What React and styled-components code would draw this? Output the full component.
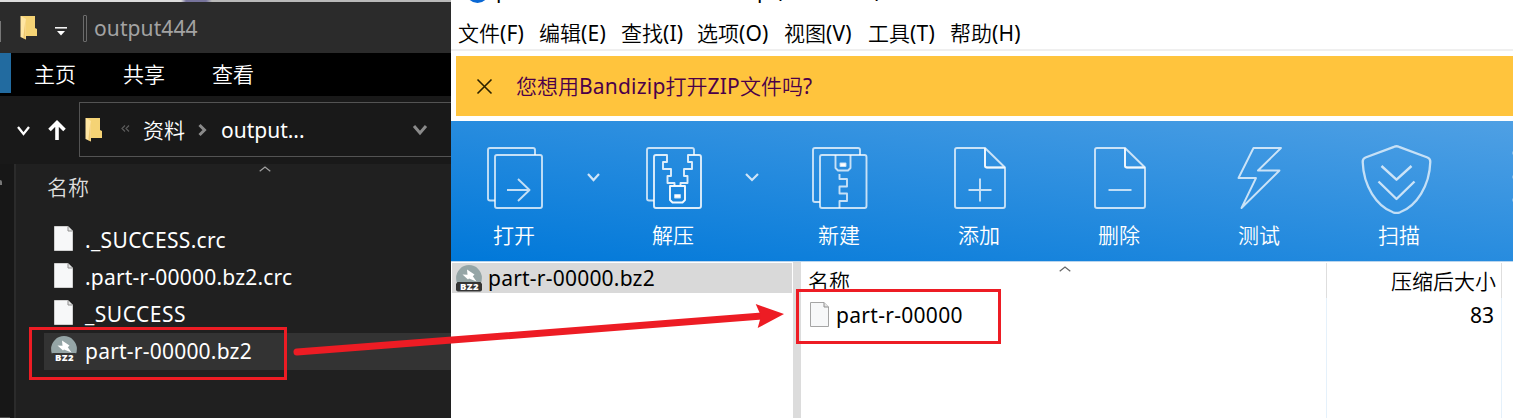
import React from "react";
import styled, { createGlobalStyle } from "styled-components";

const Global = createGlobalStyle`
  * { box-sizing: border-box; }
  body { margin: 0; background: #fff; overflow: hidden; }
  svg { display: block; flex: none; overflow: visible; }
`;

const Desktop = styled.div`
  position: relative;
  display: flex;
  width: 1513px;
  height: 418px;
  overflow: hidden;
  font-family: "Noto Sans", "Noto Sans CJK SC", sans-serif;
  font-size: 21px;
  line-height: 30px;
  white-space: nowrap;
`;

const Text = styled.span`
  display: block;
  flex: none;
  letter-spacing: ${(p) => p.$ls || 0}px;
  margin-left: ${(p) => p.$ml || 0}px;
`;

const Han = styled.span`
  font-weight: 350;
  letter-spacing: 0;
`;

/* Chinese runs are set one step lighter than the Latin ones beside them. */
const Mixed = ({ children, ...rest }) => (
  <Text {...rest}>
    {children.split(/([\u4e00-\u9fff]+)/).map((run, i) => (i % 2 ? <Han key={i}>{run}</Han> : run))}
  </Text>
);

/* ---------- file explorer ---------- */

const Explorer = styled.section`
  display: flex;
  flex-direction: column;
  width: 451px;
  height: 418px;
  flex: none;
  overflow: hidden;
  background: #191919;
  color: #fff;
`;

const DesktopEdge = styled.div`
  height: 2px;
  flex: none;
  background: linear-gradient(90deg, #dcdcdc 0 181px, #77749c 186px 206px, #b9b9b9 212px 100%);
`;

const TitleBar = styled.header`
  display: flex;
  align-items: center;
  height: 51px;
  flex: none;
  background: #2b2b2b;
  color: #a3a3a3;
`;

const EdgeTick = styled.i`
  width: 1px;
  height: 21px;
  margin: 7px 19px 0 0;
  background: #777;
`;

const QuickAccess = styled.div`
  margin: 8px 16px 0 18px;
`;

const Separator = styled.i`
  width: 4px;
  height: 27px;
  margin: 2px 7px 0 0;
  border: 1px solid #6b6b6b;
  border-radius: 1px;
`;

const Ribbon = styled.nav`
  display: flex;
  height: 43px;
  flex: none;
  background: #000;
`;

const FileTab = styled.div`
  width: 11px;
  height: 40px;
  margin-right: 23px;
  background: #226ba0;
`;

const RibbonTab = styled.div`
  width: 89px;
  padding-top: 6px;
  font-weight: 350;
`;

const AddressRow = styled.div`
  display: flex;
  height: 68px;
  flex: none;
  padding: 6px 0 0 17px;
`;

const NavButtons = styled.div`
  display: flex;
  align-items: center;
  gap: 18px;
  width: 62px;
  height: 56px;
`;

const AddressBox = styled.div`
  display: flex;
  align-items: center;
  flex: 1;
  height: 55px;
  padding-left: 5px;
  border: 1px solid #535353;
  border-right: 0;
`;

const Body = styled.div`
  display: flex;
  flex: 1;
`;

const NavPane = styled.div`
  display: flex;
  flex-direction: column;
  justify-content: space-between;
  width: 16px;
  padding-top: 16px;
  background: #171717;
  border-right: 2px solid #2b2b2b;
`;

const PinEdge = styled.i`
  width: 2px;
  height: 5px;
  background: #777;
  border-radius: 0 2px 0 0;
`;

const ScrollEdge = styled.i`
  width: 10px;
  height: 1px;
  background: #4d4d4d;
`;

const FileList = styled.div`
  flex: 1;
  background: #202020;
`;

const ColumnHeader = styled.div`
  display: flex;
  align-items: flex-start;
  height: 58px;
  padding: 2px 0 0 31px;
  color: #dedede;
`;

const ColumnName = styled.div`
  width: 212px;
  padding-top: 6px;
  font-weight: 350;
`;

const FileRow = styled.div`
  display: flex;
  align-items: center;
  height: 37px;
  margin-left: 28px;
  padding-bottom: 2px;
  background: ${(p) => (p.$selected ? "#333" : "transparent")};
`;

const IconCell = styled.div`
  display: flex;
  align-items: center;
  width: 41px;
  padding: 0 0 2px ${(p) => p.$inset}px;
  flex: none;
`;

/* ---------- archive window ---------- */

const Archive = styled.section`
  display: flex;
  flex-direction: column;
  flex: 1;
  height: 418px;
  overflow: hidden;
  background: #fff;
  color: #000;
`;

const Caption = styled.div`
  display: flex;
  align-items: flex-end;
  height: 12px;
  flex: none;
  padding: 0 0 7px 15px;
`;

const AppDot = styled.i`
  width: 23px;
  height: 23px;
  margin: 0 7px 2px 0;
  border-radius: 50%;
  background: #0a68d4;
`;

const MenuBar = styled.nav`
  display: grid;
  grid-template-columns: 81px 82px 76px 87px 84px 82px 100px;
  align-items: center;
  height: 39px;
  flex: none;
  padding: 4px 0 0 7px;
  border-bottom: 2px solid #efefef;
`;

const Banner = styled.div`
  display: flex;
  align-items: center;
  height: 60px;
  flex: none;
  margin: 5px 0 5px 5px;
  padding-left: 21px;
  background: #ffc43d;
  color: #4b0049;
`;

const Toolbar = styled.div`
  display: flex;
  height: 141px;
  flex: none;
  overflow: hidden;
  border-bottom: 1px solid #b9d5ee;
  background: linear-gradient(187.5deg, #4fa0e4 0%, #0078d9 100%);
  color: #fff;
`;

const Tool = styled.div`
  display: flex;
  flex-direction: column;
  align-items: center;
  width: ${(p) => p.$w || 140}px;
  flex: none;
  padding-top: 21px;
  font-weight: 350;
`;

const ToolLabel = styled.span`
  margin-top: 6px;
`;

const DropArrow = styled.div`
  width: ${(p) => p.$w || 34}px;
  padding: 52px 0 0 10px;
  flex: none;
`;

const Panes = styled.div`
  display: flex;
  flex: 1;
`;

const Tree = styled.div`
  width: 342px;
  padding: 1px 1px 0 1px;
`;

const TreeRow = styled.div`
  display: flex;
  align-items: center;
  height: 30px;
  padding-left: 4px;
  background: #d9d9d9;
`;

const Splitter = styled.div`
  width: 8px;
  background: #dcdcdc;
`;

const Column = styled.div`
  width: ${(p) => p.$w}px;
  flex: none;
  margin-top: 1px;
  border-right: 1px solid;
  border-image: linear-gradient(#dedede 0 36px, #e5f1fb 36px) 1;
`;

const ColumnTitle = styled.div`
  display: flex;
  justify-content: ${(p) => (p.$end ? "flex-end" : "flex-start")};
  height: 36px;
  padding: 3px 5px 0 7px;
`;

const SortMark = styled.div`
  margin-left: 209px;
`;

const Entry = styled.div`
  display: flex;
  align-items: center;
  justify-content: ${(p) => (p.$end ? "flex-end" : "flex-start")};
  height: 32px;
  padding: 0 7px 0 9px;
`;

/* ---------- annotations drawn over both windows ---------- */

const Frame = styled.div`
  position: absolute;
  left: ${(p) => p.$x}px;
  top: ${(p) => p.$y}px;
  width: ${(p) => p.$w}px;
  height: ${(p) => p.$h}px;
  border: 3px solid #ed1c24;
`;

const ArrowLayer = styled.svg`
  position: absolute;
  left: 0;
  top: 0;
  pointer-events: none;
`;

/* ---------- icons ---------- */

const Folder = () => (
  <svg width="17" height="25" viewBox="0 0 17 25">
    <path d="M1 1H15V13L17 14V21H1Z" fill="#f5d375" />
    <path d="M1 1L6 4V24.500L0.500 22V1Z" fill="#ffe6a2" />
    <path d="M5.500 4V24.500L3.500 23.500V21" fill="#e5b64b" opacity=".6" />
  </svg>
);

const Page = ({ light }) => (
  <svg width="20" height="26" viewBox="0 0 20 26">
    <path d="M.5.500H14L18.500 5V24.500H.5Z" fill="#f7f8f9" stroke={light ? "#a5a5a5" : "#d0d0d0"} />
    <path d="M14 .5V5H18.500" fill="#e5e5e5" stroke="#8f8f8f" />
  </svg>
);

const TagText = styled.text`
  font: 800 9.5px "Open Sans", sans-serif;
  letter-spacing: 0.4px;
`;

const Bz2 = () => (
  <svg width="26" height="27" viewBox="0 0 26 27">
    <circle cx="13" cy="13" r="12.900" fill="#95a5a6" />
    <path d="M11 4.500L18.500 9.500L16.800 11.300L20.500 16.500L13 13.500L12 14.500L6.500 9.500L11.500 9.800Z" fill="#fff" />
    <path d="M1.500 17H24.500L26 19V24.500Q26 26.500 24 26.500H2Q0 26.500 0 24.500V19Z" fill="#343434" />
    <TagText x="4" y="25" fill="#fff">BZ2</TagText>
  </svg>
);

const Chevron = ({ w = 14, h = 8, color = "#fff", stroke = 2, up }) => (
  <svg width={w} height={h} viewBox={`0 0 ${w} ${h}`} fill="none" stroke={color} strokeWidth={stroke}>
    <path d={up ? `M.7 ${h - 0.7}L${w / 2} 1L${w - 0.7} ${h - 0.7}` : `M1 1L${w / 2} ${h - 1}L${w - 1} 1`} />
  </svg>
);

const ToolIcon = ({ children }) => (
  <svg width="72" height="72" viewBox="0 0 72 72" fill="none" stroke="#fff" strokeOpacity=".74" strokeWidth="1.900" strokeLinejoin="round">
    {children}
  </svg>
);

const BackSheet = ({ bottom = 58.5 }) => (
  <path d={`M17 ${bottom}H12a2 2 0 0 1-2-2V8a2 2 0 0 1 2-2H55a2 2 0 0 1 2 2V13`} />
);

const OpenIcon = () => (
  <ToolIcon>
    <BackSheet />
    <rect x="17" y="13" width="47" height="53" rx="2" />
    <path d="M29 48H51.500M40 37L51.500 48L40 59" />
  </ToolIcon>
);

const ExtractIcon = () => (
  <ToolIcon>
    <BackSheet />
    <path d="M37.500 44V41H30.500V34H34V27H26V20H30V13H19a2 2 0 0 0-2 2V64a2 2 0 0 0 2 2H62a2 2 0 0 0 2-2V15a2 2 0 0 0-2-2H51V20H55V27H47V34H50.500V41H43.500V44" strokeOpacity=".85" />
    <path d="M33 44H48V58L45.500 60.500H35.500L33 58Z" strokeOpacity=".95" />
    <rect x="38" y="53" width="5" height="2.500" fill="#fff" />
  </ToolIcon>
);

const NewIcon = () => (
  <ToolIcon>
    <BackSheet bottom={60} />
    <rect x="17" y="13" width="46.500" height="53" rx="2" />
    <path d="M32.500 13V26L35 28.500H45L47.500 26V13" />
    <rect x="37.500" y="21.500" width="5" height="2.500" fill="#fff" />
    <path d="M36.500 32V37H44V44.500H36.500V51.500H44V59H36.500V66" />
  </ToolIcon>
);

const SheetIcon = ({ plus }) => (
  <ToolIcon>
    <path d="M42 6H14a2 2 0 0 0-2 2V64a2 2 0 0 0 2 2H60a2 2 0 0 0 2-2V25.500ZV23.500a2 2 0 0 0 2 2H62" />
    <path d="M42 6V23.500a2 2 0 0 0 2 2H62" />
    <path d={plus ? "M25.500 48H48.500M37 36.500V59.500" : "M25.500 48H48.500"} />
  </ToolIcon>
);

const TestIcon = () => (
  <ToolIcon>
    <path d="M30.500 6H58L35 28.500H56.500L18.500 66L33 36H15.500Z" />
  </ToolIcon>
);

const ScanIcon = () => (
  <ToolIcon>
    <path strokeWidth="2.300" strokeOpacity=".7" d="M31 4.800Q33.500 3.700 36 4.800L64.500 15.500Q67.500 16.800 67.300 20C66.500 44 53.500 64 37 70.300Q33.500 71.500 30 70.300C13.500 64 .5 44 -.3 20Q-.5 16.800 2.500 15.500Z" />
    <path strokeWidth="2.400" d="M18.500 24L33.500 37.700L48.500 24M15.500 39.500L33.500 57L51.500 39.500" />
  </ToolIcon>
);

const files = [
  { name: "._SUCCESS.crc", ls: 0.33 },
  { name: ".part-r-00000.bz2.crc", ls: 0.2 },
  { name: "_SUCCESS", ls: 0.5 },
  { name: "part-r-00000.bz2", ls: 0.22, archive: true },
];

const menus = ["文件(F)", "编辑(E)", "查找(I)", "选项(O)", "视图(V)", "工具(T)", "帮助(H)"];

const plainTools = [
  ["添加", <SheetIcon plus />],
  ["删除", <SheetIcon />],
  ["测试", <TestIcon />],
  ["扫描", <ScanIcon />],
];

export default function App() {
  return (
    <Desktop>
      <Global />
      <Explorer>
        <DesktopEdge />
        <TitleBar>
          <EdgeTick />
          <Folder />
          <QuickAccess>
            <svg width="12" height="9" viewBox="0 0 12 9">
              <path d="M0 .8H12" stroke="#fff" strokeWidth="1.500" />
              <path d="M2 4H10L6 8.500Z" fill="#fff" />
            </svg>
          </QuickAccess>
          <Separator />
          <Text $ls={0.1}>output444</Text>
        </TitleBar>
        <Ribbon>
          <FileTab />
          {["主页", "共享", "查看"].map((t) => (
            <RibbonTab key={t}>{t}</RibbonTab>
          ))}
        </Ribbon>
        <AddressRow>
          <NavButtons>
            <Chevron w={13} h={9} stroke={2.3} />
            <svg width="18" height="20" viewBox="0 0 18 20" fill="none" stroke="#fff" strokeWidth="3.600">
              <path d="M9 20V2.500M1.500 10L9 2.500L16.500 10" />
            </svg>
          </NavButtons>
          <AddressBox>
            <Folder />
            <svg width="41" height="20" viewBox="0 0 41 20" fill="none" stroke="#5c5c5c" strokeWidth="1.200">
              <path d="M23 5.500L20 8.500L23 11.500M27 5.500L24 8.500L27 11.500" />
            </svg>
            <Mixed>资料</Mixed>
            <svg width="36" height="20" viewBox="0 0 36 20" fill="none" stroke="#8a8a8a" strokeWidth="3">
              <path d="M14.500 5L19.500 10L14.500 15" />
            </svg>
            <Text>output...</Text>
            <Text $ml={108}>
              <Chevron w={14} h={9} color="#8a8a8a" stroke={3} />
            </Text>
          </AddressBox>
        </AddressRow>
        <Body>
          <NavPane>
            <PinEdge />
            <ScrollEdge />
          </NavPane>
          <FileList>
            <ColumnHeader>
              <ColumnName>名称</ColumnName>
              <Chevron up w={12} h={6} color="#a0a0a0" stroke={1.2} />
            </ColumnHeader>
            {files.map((f) => (
              <FileRow key={f.name} $selected={f.archive}>
                <IconCell $inset={f.archive ? 7 : 10}>{f.archive ? <Bz2 /> : <Page />}</IconCell>
                <Text $ls={f.ls}>{f.name}</Text>
              </FileRow>
            ))}
          </FileList>
        </Body>
      </Explorer>

      <Archive>
        <Caption>
          <AppDot />
          <Text $ls={0.3}>part-r-00000.bz2 - Bandizip (Standard)</Text>
        </Caption>
        <MenuBar>
          {menus.map((m) => (
            <Mixed key={m} $ls={0.2}>{m}</Mixed>
          ))}
        </MenuBar>
        <Banner>
          <svg width="15" height="15" viewBox="0 0 15 15" stroke="#2b2100" strokeWidth="1.600">
            <path d="M.5.500L14.500 14.500M14.500.500L.5 14.500" />
          </svg>
          <Mixed $ml={24} $ls={0.2}>您想用Bandizip打开ZIP文件吗?</Mixed>
        </Banner>
        <Toolbar>
          <Tool $w={126}>
            <OpenIcon />
            <ToolLabel>打开</ToolLabel>
          </Tool>
          <DropArrow>
            <Chevron w={13} h={8} color="#cfe4f7" stroke={2.2} />
          </DropArrow>
          <Tool $w={124}>
            <ExtractIcon />
            <ToolLabel>解压</ToolLabel>
          </Tool>
          <DropArrow $w={34}>
            <Chevron w={14} h={8} color="#cfe4f7" stroke={2.2} />
          </DropArrow>
          <Tool>
            <NewIcon />
            <ToolLabel>新建</ToolLabel>
          </Tool>
          {plainTools.map(([label, icon]) => (
            <Tool key={label}>
              {icon}
              <ToolLabel>{label}</ToolLabel>
            </Tool>
          ))}
          <Tool $w={90}>
            <ToolIcon>
              <circle cx="39.500" cy="11" r="4" />
              <circle cx="39.500" cy="35" r="4" />
              <circle cx="39.500" cy="58" r="4" />
            </ToolIcon>
          </Tool>
        </Toolbar>
        <Panes>
          <Tree>
            <TreeRow>
              <Bz2 />
              <Text $ml={6} $ls={0.22}>part-r-00000.bz2</Text>
            </TreeRow>
          </Tree>
          <Splitter />
          <Column $w={526}>
            <ColumnTitle>
              <Mixed>名称</Mixed>
              <SortMark>
                <Chevron up w={12} h={6} color="#666" stroke={1.2} />
              </SortMark>
            </ColumnTitle>
            <Entry>
              <Page light />
              <Text $ml={6} $ls={0.3}>part-r-00000</Text>
            </Entry>
          </Column>
          <Column $w={175}>
            <ColumnTitle $end>
              <Mixed>压缩后大小</Mixed>
            </ColumnTitle>
            <Entry $end>
              <Text>83</Text>
            </Entry>
          </Column>
        </Panes>
      </Archive>

      <Frame $x={29} $y={327} $w={258} $h={53} />
      <Frame $x={796} $y={289} $w={205} $h={55} />
      <ArrowLayer width="1513" height="418" viewBox="0 0 1513 418">
        <path d="M297 352L762 316" stroke="#ed1c24" strokeWidth="7" strokeLinecap="round" />
        <path d="M755.700 304L784 314L757.700 328L761 316Z" fill="#ed1c24" />
      </ArrowLayer>
    </Desktop>
  );
}
